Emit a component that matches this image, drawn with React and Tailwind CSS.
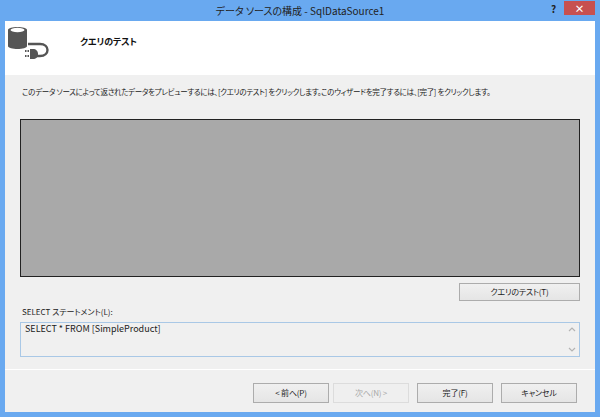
const font = { fontFamily: '"Noto Sans CJK JP", "Liberation Sans", sans-serif' };

function DbIcon() {
  return (
    <svg width="46" height="42" viewBox="0 0 46 42" className="absolute left-[2px] top-[4px]">
      <path d="M1 5 C1 1 20 1 20 5 V21 C20 25 1 25 1 21 Z" fill="#555" />
      <ellipse cx="10.5" cy="5" rx="7" ry="2.2" fill="#fff" />
      <path d="M21 19 H33 C43 19 43 31 33 31 H29" fill="none" stroke="#555" strokeWidth="2.4" />
      <path d="M23 24 H26 C29 24 31 26 31 29 C31 32 29 34 26 34 H23 Z" fill="#555" />
      <path d="M18 26 H22 M18 31 H22" stroke="#555" strokeWidth="1.8" strokeDasharray="1.5 1" />
    </svg>
  );
}

function Btn({ children, w, h = 'h-[20px]', disabled }) {
  return (
    <div
      className={`flex items-center justify-center border text-[8px] tracking-[-0.2px] ${h} ${w} ${
        disabled
          ? 'border-[#dcdcdc] bg-[#efefef] text-[#a8a8a8]'
          : 'border-[#acacac] bg-gradient-to-b from-[#f0f0f0] to-[#e5e5e5] text-[#222]'
      }`}
    >
      {children}
    </div>
  );
}

export default function App() {
  return (
    <div className="relative flex h-[417px] w-[600px] flex-col overflow-hidden bg-[#69a9f0] [font-feature-settings:'palt']" style={font}>
      <div className="flex h-[21px] shrink-0 items-center justify-center text-[10px] leading-none text-[#222]">
        データ ソースの構成 - SqlDataSource1
      </div>
      <div className="absolute left-[551px] top-[1px] text-[10px] font-bold text-[#222]">?</div>
      <div className="absolute left-[564px] top-[1px] flex h-[14px] w-[31px] items-center justify-center bg-[#c75050] text-[10px] font-bold text-white">
        ×
      </div>

      <div className="mx-[5px] mb-[5px] flex flex-1 flex-col bg-[#f0f0f0]">
        <div className="relative flex h-[54px] shrink-0 items-center bg-white pb-[12px] pl-[75px]">
          <DbIcon />
          <span className="text-[9px] font-bold tracking-[-0.1px] text-[#111]">クエリのテスト</span>
        </div>

        <div className="flex flex-1 flex-col px-[15px]">
          <p className="mt-[10px] h-[34px] shrink-0 pl-[2px] text-[7.5px] leading-[14px] tracking-[-0.3px] text-[#222]">
            このデータ ソースによって返されたデータをプレビューするには、[クエリのテスト] をクリックします。このウィザードを完了するには、[完了] をクリックします。
          </p>
          <div className="h-[158px] shrink-0 border border-[#222] bg-[#a9a9a9]" />
          <div className="mt-[6px] flex shrink-0 justify-end">
            <Btn w="w-[121px]" h="h-[18px]">クエリのテスト(T)</Btn>
          </div>
          <div className="mt-[4px] h-[14px] shrink-0 pl-[2px] text-[8px] leading-[14px] text-[#222]">
            SELECT ステートメント(L):
          </div>
          <div className="mt-[3px] flex h-[35px] shrink-0 justify-between border border-[#a9c8e6] pl-[4px] text-[9px] leading-[12px] text-[#222]">
            <span>SELECT * FROM [SimpleProduct]</span>
            <div className="flex w-[15px] flex-col items-center justify-between py-[4px] text-[#b4b4b4]">
              <svg width="8" height="5" viewBox="0 0 8 5"><path d="M1 4 L4 1 L7 4" fill="none" stroke="currentColor" strokeWidth="1.2" /></svg>
              <svg width="8" height="5" viewBox="0 0 8 5"><path d="M1 1 L4 4 L7 1" fill="none" stroke="currentColor" strokeWidth="1.2" /></svg>
            </div>
          </div>
        </div>

        <div className="flex h-[43px] shrink-0 items-start justify-end gap-[8px] border-t border-white pr-[18px] pt-[13px]">
          <div className="flex gap-[4px]">
            <Btn w="w-[76px]">&lt; 前へ(P)</Btn>
            <Btn w="w-[76px]" disabled>次へ(N) &gt;</Btn>
          </div>
          <Btn w="w-[76px]">完了(F)</Btn>
          <Btn w="w-[76px]">キャンセル</Btn>
        </div>
      </div>
    </div>
  );
}
